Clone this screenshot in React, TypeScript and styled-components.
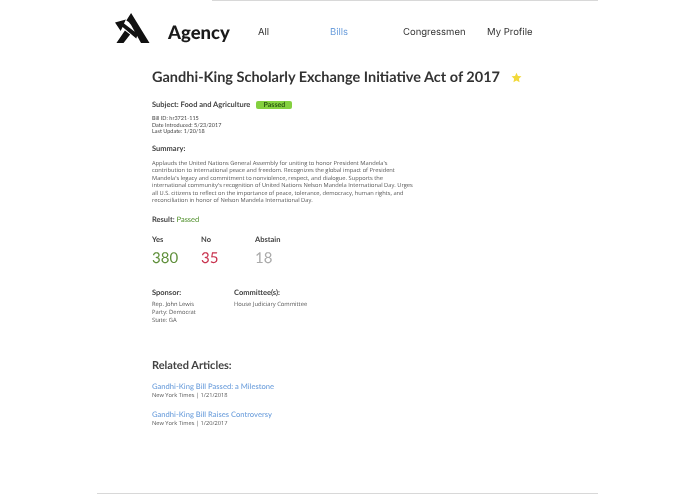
import React from "react";
import styled, { createGlobalStyle } from "styled-components";

const GlobalStyle = createGlobalStyle`
  html, body {
    margin: 0;
    padding: 0;
    background: #fff;
    color: #333;
    font-family: "Open Sans", sans-serif;
    text-rendering: geometricPrecision;
  }
`;

const Frame = styled.div`
  box-sizing: border-box;
  width: 501px;
  height: 494px;
  margin-left: 97px;
  border-bottom: 1px solid #d8d8d8;
  overflow: hidden;
  will-change: transform;
`;

const TopRule = styled.div`
  height: 1px;
  margin-left: 115px;
  background: #d8d8d8;
`;

const Header = styled.header`
  display: flex;
  align-items: center;
  height: 44px;
  margin-top: 9px;
  padding-left: 18px;
`;

const Brand = styled.div`
  display: flex;
  align-items: center;
  gap: 18px;
  width: 143px;
  font-family: "Lato", sans-serif;
  font-size: 18.5px;
  font-weight: 900;
  color: #1a1a1a;
`;

const LogoMark = styled.svg`
  flex: none;
  margin-bottom: 6px;
`;

const Nav = styled.nav`
  display: flex;
  align-items: center;
  font-family: "Inter", sans-serif;
  font-size: 9.5px;
  color: #333;
`;

const NavItem = styled.a<{ $width: number; $active?: boolean }>`
  width: ${(p) => p.$width}px;
  white-space: nowrap;
  color: ${(p) => (p.$active ? "#6d9fdc" : "#333")};
`;

const Main = styled.main`
  padding: 15px 0 0 55px;
`;

const TitleRow = styled.div`
  display: flex;
  align-items: center;
  gap: 11px;
`;

const Title = styled.h1`
  margin: 0;
  font-family: "Lato", sans-serif;
  font-size: 14.5px;
  font-weight: 700;
  color: #333;
  white-space: nowrap;
`;

const SubjectRow = styled.div`
  display: flex;
  align-items: center;
  gap: 6px;
  margin-top: 14px;
  font-family: "Lato", sans-serif;
  font-size: 7.5px;
  font-weight: 700;
  color: #444;
`;

const Badge = styled.span`
  width: 36px;
  height: 8px;
  border-radius: 2px;
  background: #84d03f;
  color: #2c5a12;
  font-size: 7px;
  font-weight: 700;
  line-height: 8px;
  text-align: center;
`;

const Meta = styled.div`
  margin-top: 7px;
  font-family: "Lato", sans-serif;
  font-size: 5.5px;
  line-height: 6.5px;
  color: #444;
`;

const Label = styled.div`
  font-family: "Lato", sans-serif;
  font-size: 7.5px;
  font-weight: 700;
  color: #444;
`;

const Summary = styled.div`
  margin-top: 8px;
`;

const Body = styled.p`
  width: 280px;
  margin: 7px 0 0;
  font-size: 5.73px;
  line-height: 7.6px;
  color: #555;
  white-space: pre-line;
`;

const Result = styled(Label)`
  margin-top: 10px;
`;

const PassedText = styled.span`
  font-weight: 400;
  color: #4f8f2a;
`;

const Votes = styled.div`
  display: flex;
  margin-top: 11px;
`;

const Vote = styled.div<{ $width: number }>`
  width: ${(p) => p.$width}px;
`;

const VoteCount = styled.div<{ $color: string }>`
  margin-top: 5px;
  font-family: "Lato", sans-serif;
  font-size: 15px;
  font-weight: 400;
  color: ${(p) => p.$color};
`;

const Details = styled.div`
  display: flex;
  margin-top: 21px;
`;

const Detail = styled.div<{ $width: number }>`
  width: ${(p) => p.$width}px;
`;

const DetailText = styled.div`
  margin-top: 4px;
  font-size: 5.8px;
  line-height: 7.9px;
  color: #555;
  white-space: pre-line;
`;

const Related = styled.section`
  margin-top: 34px;
`;

const RelatedTitle = styled.h2`
  margin: 0 0 10px;
  font-family: "Lato", sans-serif;
  font-size: 11px;
  font-weight: 700;
  color: #444;
`;

const Article = styled.div`
  margin-bottom: 11px;
`;

const ArticleLink = styled.a`
  display: block;
  font-family: "Lato", sans-serif;
  font-size: 7.6px;
  line-height: 9px;
  font-weight: 500;
  color: #6d9fdc;
`;

const ArticleSource = styled.div`
  font-size: 5.7px;
  line-height: 8px;
  color: #555;
`;

const Logo = () => (
  <LogoMark width="35" height="32" viewBox="0 0 37 32" preserveAspectRatio="none" aria-hidden="true">
    <path
      fill="#111"
      d="M17 0 L36.5 30 L27.5 30 L17 12 L14.5 9 L12 7.5 Z M0 9.5 L11.5 6.5 L9.5 10.5 L24 21 L22.5 25.5 L8 14 L6 18 Z M10.5 17.5 L16 21.5 L9 30 L1.5 30 Z"
    />
  </LogoMark>
);

const Star = () => (
  <svg width="11" height="11" viewBox="0 0 24 24" aria-hidden="true">
    <path
      fill="#f2d93a"
      d="M12 1.5l3.2 7 7.6.9-5.6 5.2 1.5 7.5L12 18.4l-6.7 3.7 1.5-7.5L1.2 9.4l7.6-.9z"
    />
  </svg>
);

const votes = [
  { label: "Yes", count: 380, color: "#5f8f3a", width: 49 },
  { label: "No", count: 35, color: "#c8324e", width: 54 },
  { label: "Abstain", count: 18, color: "#aaa", width: 60 },
];

const articles = [
  { title: "Gandhi-King Bill Passed: a Milestone", source: "New York Times | 1/21/2018" },
  { title: "Gandhi-King Bill Raises Controversy", source: "New York Times | 1/20/2017" },
];

const App: React.FC = () => {
  return (
    <Frame>
      <GlobalStyle />
      <TopRule />
      <Header>
        <Brand>
          <Logo />
          Agency
        </Brand>
        <Nav>
          <NavItem $width={72}>All</NavItem>
          <NavItem $width={73} $active>
            Bills
          </NavItem>
          <NavItem $width={84}>Congressmen</NavItem>
          <NavItem $width={50}>My Profile</NavItem>
        </Nav>
      </Header>
      <Main>
        <TitleRow>
          <Title>Gandhi-King Scholarly Exchange Initiative Act of 2017</Title>
          <Star />
        </TitleRow>
        <SubjectRow>
          Subject: Food and Agriculture
          <Badge>Passed</Badge>
        </SubjectRow>
        <Meta>
          Bill ID: hr3721-115
          <br />
          Date Introduced: 5/23/2017
          <br />
          Last Update: 1/20/18
        </Meta>
        <Summary>
          <Label>Summary:</Label>
          <Body>
            {`Applauds the United Nations General Assembly for uniting to honor President Mandela's
contribution to international peace and freedom. Recognizes the global impact of President
Mandela's legacy and commitment to nonviolence, respect, and dialogue.  Supports the
international community's recognition of United Nations Nelson Mandela International Day.  Urges
all U.S. citizens to reflect on the importance of peace, tolerance, democracy, human rights, and
reconciliation in honor of Nelson Mandela International Day.`}
          </Body>
        </Summary>
        <Result>
          Result: <PassedText>Passed</PassedText>
        </Result>
        <Votes>
          {votes.map((v) => (
            <Vote key={v.label} $width={v.width}>
              <Label>{v.label}</Label>
              <VoteCount $color={v.color}>{v.count}</VoteCount>
            </Vote>
          ))}
        </Votes>
        <Details>
          <Detail $width={82}>
            <Label>Sponsor:</Label>
            <DetailText>{`Rep. John Lewis
Party: Democrat
State: GA`}</DetailText>
          </Detail>
          <Detail $width={120}>
            <Label>Committee(s):</Label>
            <DetailText>House Judiciary Committee</DetailText>
          </Detail>
        </Details>
        <Related>
          <RelatedTitle>Related Articles:</RelatedTitle>
          {articles.map((a) => (
            <Article key={a.title}>
              <ArticleLink>{a.title}</ArticleLink>
              <ArticleSource>{a.source}</ArticleSource>
            </Article>
          ))}
        </Related>
      </Main>
    </Frame>
  );
};

export default App;
